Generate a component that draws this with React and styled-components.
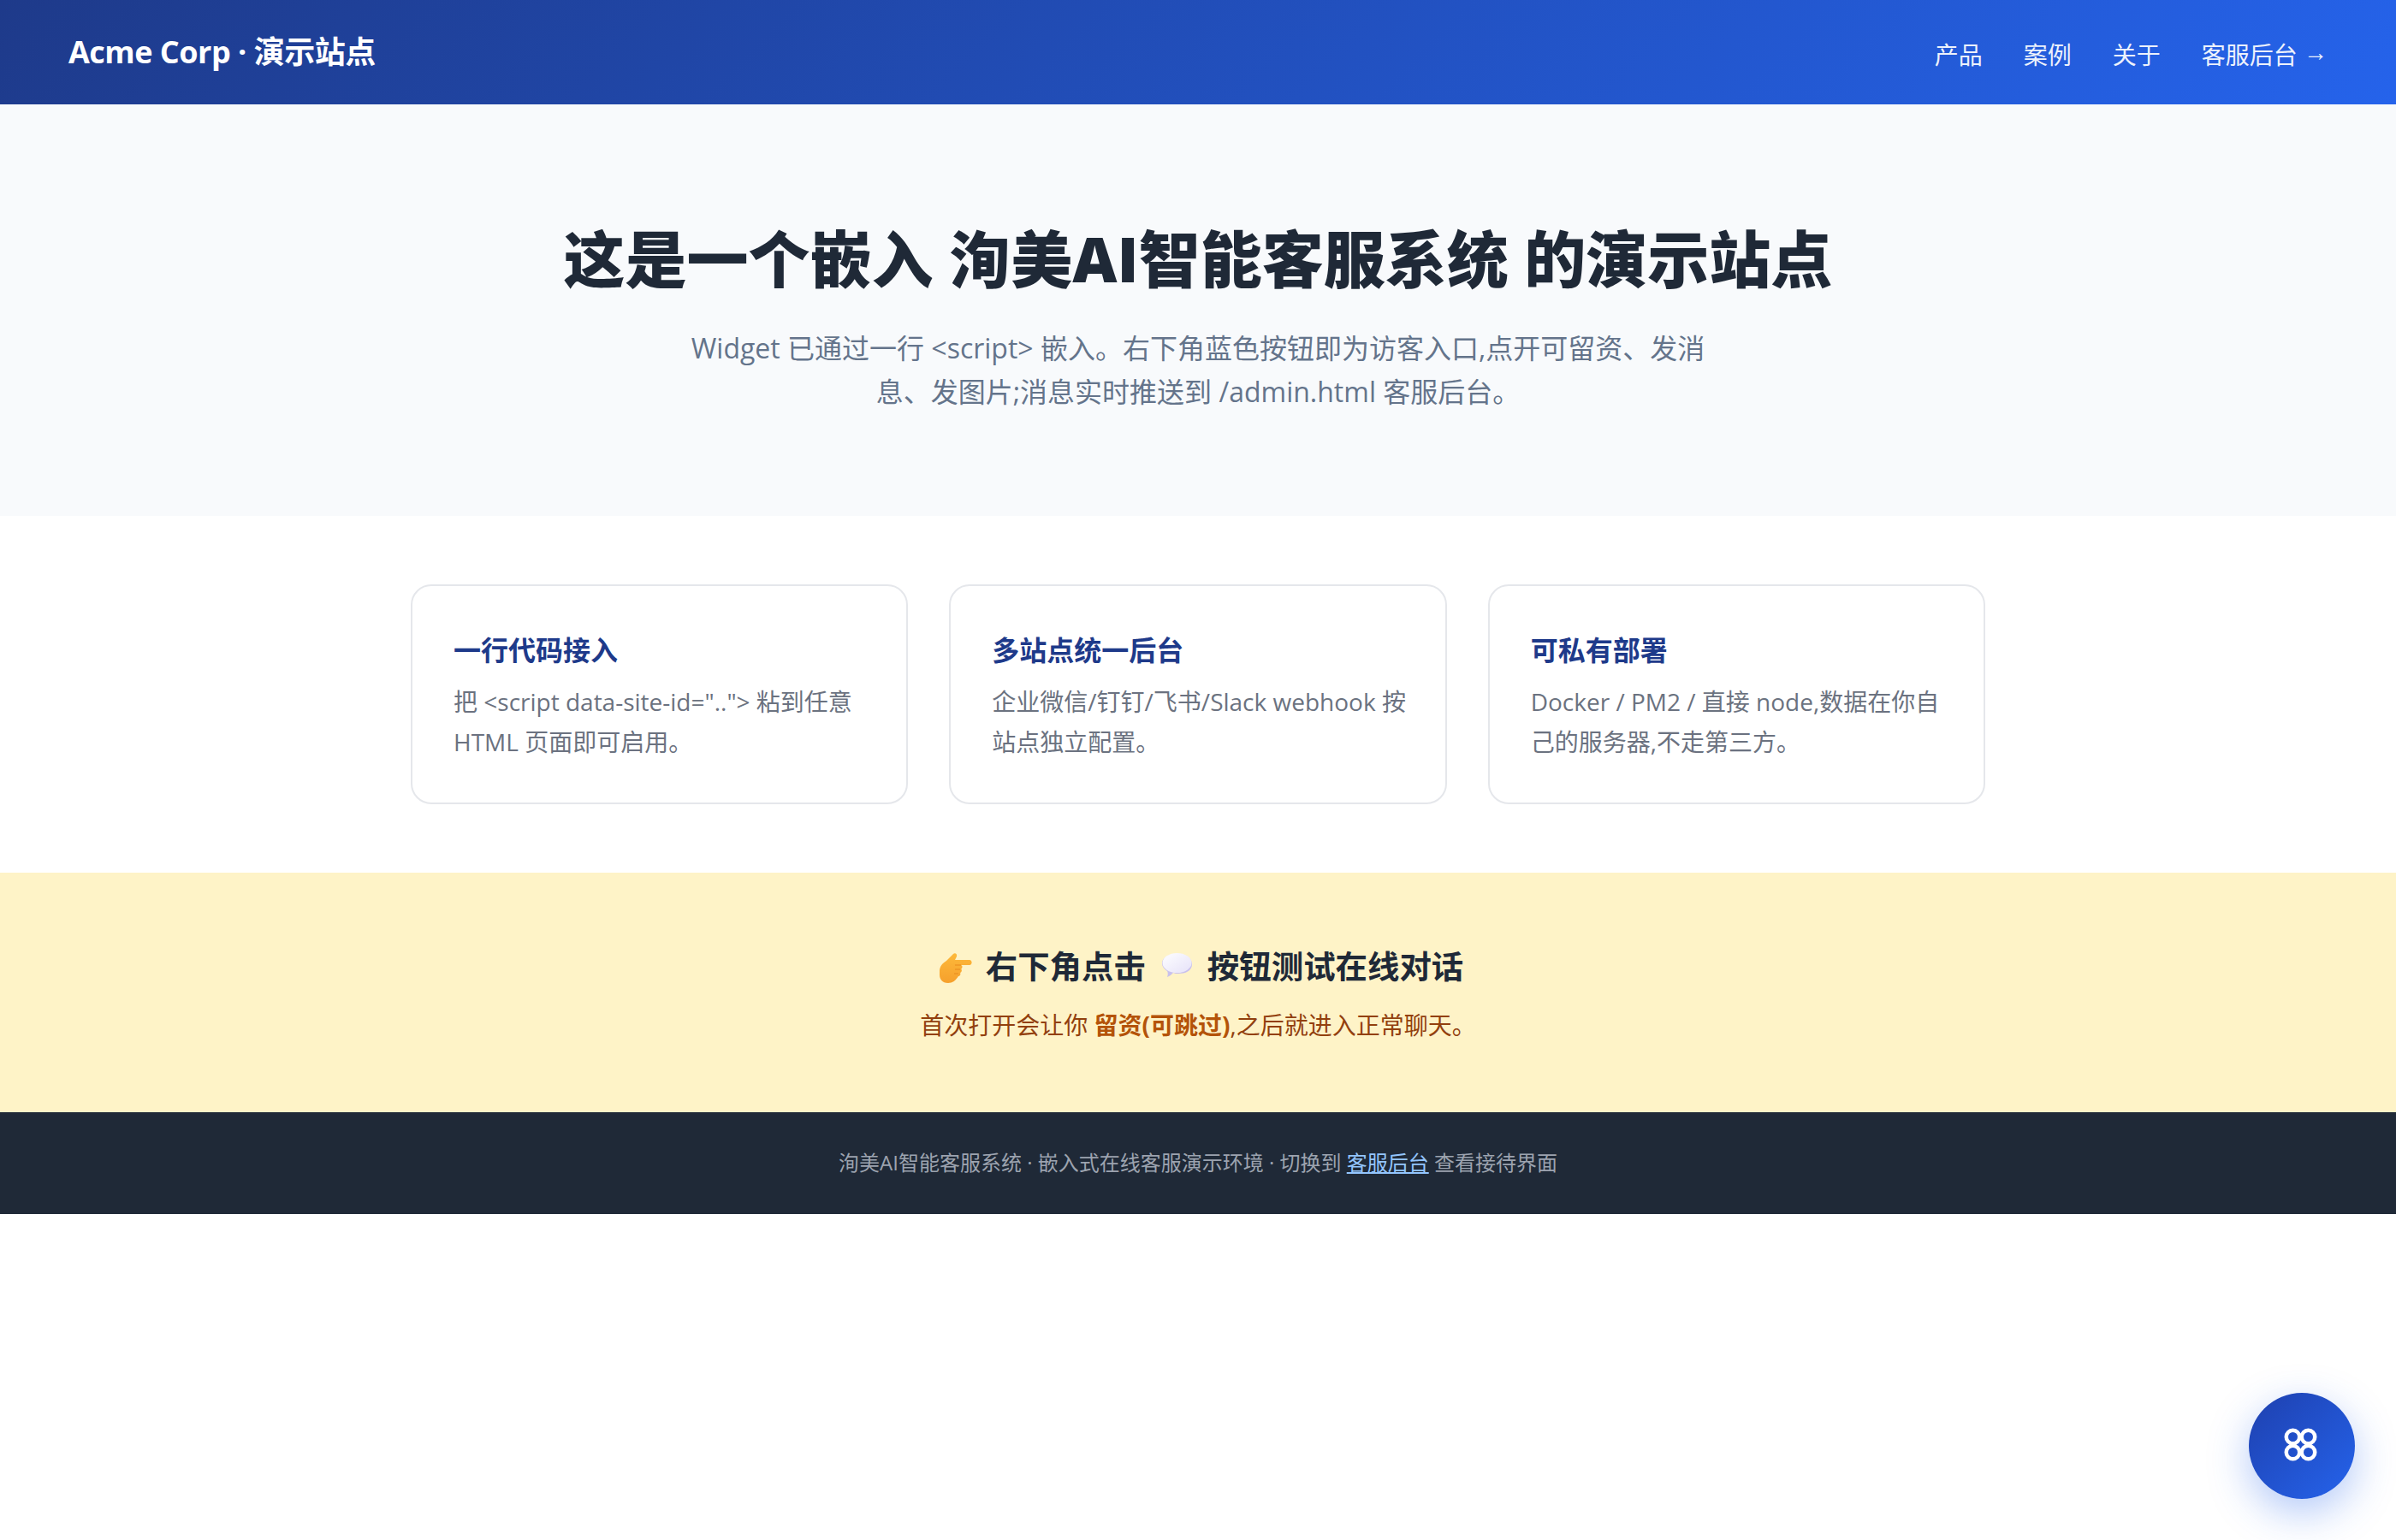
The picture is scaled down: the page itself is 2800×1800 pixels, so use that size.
import React from 'react'
import styled, { createGlobalStyle } from 'styled-components'

const GlobalStyle = createGlobalStyle`
  * { box-sizing: border-box; }
  html, body { margin: 0; padding: 0; background: #fff; }
  body {
    font-family: "Open Sans", "Noto Sans CJK SC", sans-serif;
    line-height: 1.6;
    color: #1f2937;
  }
`;

const Nav = styled.nav`
  display: flex;
  justify-content: space-between;
  align-items: center;
  padding: 32px 80px;
  background: linear-gradient(135deg, #1e3a8a, #2563eb);
  color: #fff;
`;

const Logo = styled.div`
  font-size: 36px;
  font-weight: 700;
  letter-spacing: -0.5px;
`;

const NavLinks = styled.div`
  display: flex;
  gap: 48px;
  padding-top: 8px;
`;

const NavLink = styled.a`
  font-size: 28px;
  color: #fff;
  opacity: 0.92;
  text-decoration: none;
`;

const NavArrow = styled.span`
  font-family: "Liberation Sans", sans-serif;
  font-size: 28px;
  line-height: 1;
  vertical-align: 4px;
`;

const Hero = styled.section`
  padding: 123px 40px 120px;
  background: #f8fafc;
  text-align: center;
`;

const HeroTitle = styled.h1`
  margin: 0 0 21px;
  font-size: 72px;
  font-weight: 800;
  color: #1f2937;
`;

const HeroText = styled.p`
  max-width: 1200px;
  margin: 0 auto;
  font-size: 32px;
  color: #64748b;
`;

const Features = styled.section`
  display: grid;
  grid-template-columns: repeat(3, 1fr);
  gap: 48px;
  max-width: 1840px;
  margin: 0 auto;
  padding: 80px 0;
`;

const Card = styled.div`
  padding: 49px 44px 48px 48px;
  border: 2px solid #e5e7eb;
  border-radius: 24px;
  background: #fff;
`;

const CardTitle = styled.h3`
  margin: 0 0 12px;
  font-size: 32px;
  font-weight: 700;
  color: #1e3a8a;
`;

const CardText = styled.p`
  margin: 0;
  font-size: 28px;
  line-height: 1.65;
  color: #6b7280;
`;

const Banner = styled.section`
  padding: 80px 40px;
  background: #fef3c7;
  text-align: center;
`;

const BannerTitle = styled.h3`
  display: flex;
  justify-content: center;
  align-items: center;
  margin: 0 0 16px;
  font-size: 37.44px;
  font-weight: 700;
  color: #1f2937;
`;

const Emoji = styled.svg`
  flex: none;
  width: 48px;
  height: 48px;
  margin: 0 ${(p) => p.$right}px 0 ${(p) => p.$left}px;
`;

const BannerText = styled.p`
  margin: 0;
  font-size: 28px;
  color: #92400e;
`;

const Strong = styled.strong`
  color: #b45309;
`;

const Footer = styled.footer`
  padding: 40px;
  background: #1f2937;
  color: #9ca3af;
  font-size: 24px;
  text-align: center;
`;

const FooterLink = styled.a`
  color: #93c5fd;
  text-decoration: underline;
`;

const ChatButton = styled.button`
  position: fixed;
  right: 48px;
  bottom: 48px;
  display: flex;
  align-items: center;
  justify-content: center;
  width: 124px;
  height: 124px;
  padding: 0;
  border: none;
  border-radius: 50%;
  background: linear-gradient(135deg, #1e40af, #2563eb);
  box-shadow: 0 16px 48px rgba(37, 99, 235, 0.35);
`;

const features = [
  { title: '一行代码接入', text: '把 <script data-site-id=".."> 粘到任意 HTML 页面即可启用。' },
  { title: '多站点统一后台', text: '企业微信/钉钉/飞书/Slack webhook 按站点独立配置。' },
  { title: '可私有部署', text: 'Docker / PM2 / 直接 node,数据在你自己的服务器,不走第三方。' },
];

const PointIcon = () => (
  <Emoji $left={0} $right={14} viewBox="0 0 48 48">
    <defs>
      <linearGradient id="hand" x1="0" y1="0" x2="0" y2="1">
        <stop offset="0" stopColor="#fdb93a" />
        <stop offset="1" stopColor="#f6a02c" />
      </linearGradient>
    </defs>
    <path d="M8 29c0-5 3-9 8-12l8-8c2-2 5 0 4 3l-2 4h17c3.500 0 3.500 6 0 6H33c2 0 2 4 0 4.500 1.500 1 1 4-1 4.500 1 1.500 0 4-2 4-3 5-7 8-12 8-7 0-10-5-10-9.500z" fill="url(#hand)" />
    <path d="M26 22h7M26 27h6M25 32h5" stroke="#e88a1d" strokeWidth="1" fill="none" />
  </Emoji>
);

const BubbleIcon = () => (
  <Emoji $left={14} $right={10} viewBox="0 0 48 48">
    <defs>
      <linearGradient id="bubble" x1="0" y1="0" x2="1" y2="1">
        <stop offset="0.2" stopColor="#f9f8fe" />
        <stop offset="1" stopColor="#e6e2f8" />
      </linearGradient>
    </defs>
    <path d="M23 9c10 0 17 5 17 12 0 8-8 11-16 11-2 0-4 0-6-1-2 2-4 4-7 5 1-3 1-5 0-7-3-2-6-5-6-9 0-7 8-11 18-11z" fill="#c9c1ec" />
    <ellipse cx="22.500" cy="19.500" rx="17" ry="11.500" fill="url(#bubble)" />
  </Emoji>
);

const CloverIcon = () => (
  <svg width="44" height="44" viewBox="0 0 44 44" fill="none" stroke="#fff" strokeWidth="4.5">
    <circle cx="11.500" cy="11.500" r="7.75" />
    <circle cx="29.500" cy="11.500" r="7.75" />
    <circle cx="11.500" cy="29.500" r="7.75" />
    <circle cx="29.500" cy="29.500" r="7.75" />
  </svg>
);

export default function App() {
  return (
    <>
      <GlobalStyle />
      <Nav>
        <Logo>Acme Corp · 演示站点</Logo>
        <NavLinks>
          <NavLink>产品</NavLink>
          <NavLink>案例</NavLink>
          <NavLink>关于</NavLink>
          <NavLink>客服后台 <NavArrow>→</NavArrow></NavLink>
        </NavLinks>
      </Nav>
      <Hero>
        <HeroTitle>这是一个嵌入 洵美AI智能客服系统 的演示站点</HeroTitle>
        <HeroText>
          Widget 已通过一行 &lt;script&gt; 嵌入。右下角蓝色按钮即为访客入口,点开可留资、发消息、发图片;消息实时推送到 /admin.html 客服后台。
        </HeroText>
      </Hero>
      <Features>
        {features.map((item) => (
          <Card key={item.title}>
            <CardTitle>{item.title}</CardTitle>
            <CardText>{item.text}</CardText>
          </Card>
        ))}
      </Features>
      <Banner>
        <BannerTitle>
          <PointIcon />
          右下角点击
          <BubbleIcon />
          按钮测试在线对话
        </BannerTitle>
        <BannerText>
          首次打开会让你 <Strong>留资(可跳过)</Strong>,之后就进入正常聊天。
        </BannerText>
      </Banner>
      <Footer>
        洵美AI智能客服系统 · 嵌入式在线客服演示环境 · 切换到 <FooterLink>客服后台</FooterLink> 查看接待界面
      </Footer>
      <ChatButton aria-label="打开客服">
        <CloverIcon />
      </ChatButton>
    </>
  )
}
